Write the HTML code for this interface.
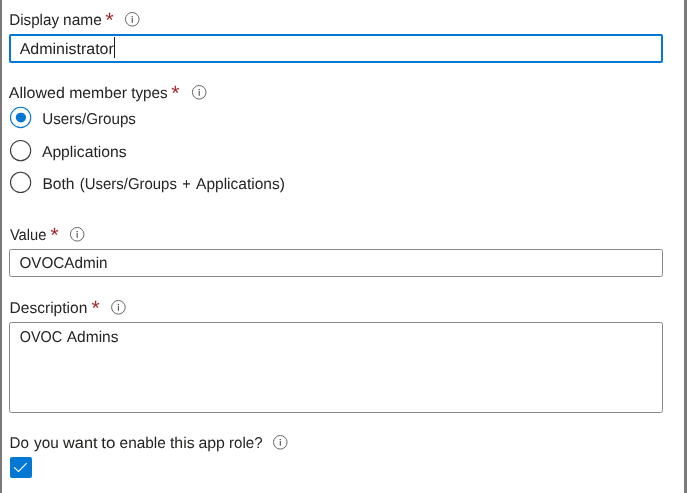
<!DOCTYPE html>
<html><head><meta charset="utf-8">
<style>
html,body{margin:0;padding:0;background:#fff;}
body{width:687px;height:493px;position:relative;overflow:hidden;font-family:"Liberation Sans",sans-serif;color:#323130;}
.lb{position:absolute;left:0;top:0;width:2px;height:493px;background:#7a7878;}
.rb{position:absolute;left:684px;top:0;width:3px;height:493px;background:#7a7878;}
.inp{position:absolute;left:9px;width:654px;box-sizing:border-box;border:1px solid #8a8886;border-radius:2.5px;background:#fff;}
.inp.f{border:2px solid #0277d4;border-radius:2px;}
.ov{position:absolute;left:0;top:0;will-change:transform;}
.tx{font-family:"Liberation Sans",sans-serif;font-size:15.6px;fill:#252423;text-rendering:geometricPrecision;}
.cb{position:absolute;left:10px;top:457px;width:22px;height:21px;background:#0277d4;border-radius:2px;}
.caret{position:absolute;left:114px;top:37px;width:1px;height:21px;background:#1b1b1b;}
</style></head><body>
<div class="lb"></div><div class="rb"></div>
<div class="inp f" style="top:34px;height:29px;"></div>
<div class="caret"></div>
<div class="inp" style="top:249px;height:28px;"></div>
<div class="inp" style="top:322px;height:91px;"></div>
<div class="cb"></div>
<svg class="ov" width="687" height="493" viewBox="0 0 687 493">
<path d="M109.95 16.60L110.30 12.85L108.70 12.85L109.05 16.60ZM109.64 17.03L113.31 16.20L112.82 14.68L109.36 16.17ZM109.14 16.86L111.06 20.10L112.35 19.16L109.86 16.34ZM109.14 16.34L106.65 19.16L107.94 20.10L109.86 16.86ZM109.64 16.17L106.18 14.68L105.69 16.20L109.36 17.03Z" fill="#a4262c"/><circle cx="109.50" cy="16.60" r="0.7" fill="#a4262c"/><circle cx="132.25" cy="19.30" r="6.8" fill="none" stroke="#676563" stroke-width="1"/><rect x="131.70" y="18.00" width="1.1" height="4.8" fill="#535150"/><rect x="131.60" y="15.95" width="1.3" height="1.25" fill="#535150"/>
<path d="M175.85 89.60L176.20 85.85L174.60 85.85L174.95 89.60ZM175.54 90.03L179.21 89.20L178.72 87.68L175.26 89.17ZM175.04 89.86L176.96 93.10L178.25 92.16L175.76 89.34ZM175.04 89.34L172.55 92.16L173.84 93.10L175.76 89.86ZM175.54 89.17L172.08 87.68L171.59 89.20L175.26 90.03Z" fill="#a4262c"/><circle cx="175.40" cy="89.60" r="0.7" fill="#a4262c"/><circle cx="199.20" cy="92.30" r="6.8" fill="none" stroke="#676563" stroke-width="1"/><rect x="198.65" y="91.00" width="1.1" height="4.8" fill="#535150"/><rect x="198.55" y="88.95" width="1.3" height="1.25" fill="#535150"/>
<circle cx="20.6" cy="117.45" r="10.15" fill="#fff" stroke="#0277d4" stroke-width="1.1"/><ellipse cx="20.9" cy="117.55" rx="5.15" ry="4.85" fill="#0277d4"/><circle cx="20.6" cy="150.6" r="10.1" fill="#fff" stroke="#3d3c3a" stroke-width="1.1"/><circle cx="20.6" cy="182.4" r="10.1" fill="#fff" stroke="#3d3c3a" stroke-width="1.1"/>
<path d="M54.95 231.60L55.30 227.85L53.70 227.85L54.05 231.60ZM54.64 232.03L58.31 231.20L57.82 229.68L54.36 231.17ZM54.14 231.86L56.06 235.10L57.35 234.16L54.86 231.34ZM54.14 231.34L51.65 234.16L52.94 235.10L54.86 231.86ZM54.64 231.17L51.18 229.68L50.69 231.20L54.36 232.03Z" fill="#a4262c"/><circle cx="54.50" cy="231.60" r="0.7" fill="#a4262c"/><circle cx="77.20" cy="234.30" r="6.8" fill="none" stroke="#676563" stroke-width="1"/><rect x="76.65" y="233.00" width="1.1" height="4.8" fill="#535150"/><rect x="76.55" y="230.95" width="1.3" height="1.25" fill="#535150"/>
<path d="M96.05 304.60L96.40 300.85L94.80 300.85L95.15 304.60ZM95.74 305.03L99.41 304.20L98.92 302.68L95.46 304.17ZM95.24 304.86L97.16 308.10L98.45 307.16L95.96 304.34ZM95.24 304.34L92.75 307.16L94.04 308.10L95.96 304.86ZM95.74 304.17L92.28 302.68L91.79 304.20L95.46 305.03Z" fill="#a4262c"/><circle cx="95.60" cy="304.60" r="0.7" fill="#a4262c"/><circle cx="118.40" cy="307.30" r="6.8" fill="none" stroke="#676563" stroke-width="1"/><rect x="117.85" y="306.00" width="1.1" height="4.8" fill="#535150"/><rect x="117.75" y="303.95" width="1.3" height="1.25" fill="#535150"/>
<circle cx="280.30" cy="442.30" r="6.8" fill="none" stroke="#676563" stroke-width="1"/><rect x="279.75" y="441.00" width="1.1" height="4.8" fill="#535150"/><rect x="279.65" y="438.95" width="1.3" height="1.25" fill="#535150"/>
<path d="M14.1 467.4 L18.55 471.5 L26.7 463.2" fill="none" stroke="#fff" stroke-width="1.15"/>
<g class="tx"><text transform="translate(9.2 25) scale(0.9751 1)">Display</text><text transform="translate(63.08 25) scale(0.9942 1)">name</text><text transform="translate(19.63 54) scale(1.025 1)">Administrator</text><text transform="translate(8.84 98) scale(1.0245 1)">Allowed</text><text transform="translate(69.16 98) scale(1.0128 1)">member</text><text transform="translate(131.19 98) scale(0.9798 1)">types</text><text transform="translate(42.28 124) scale(0.9735 1)">Users/Groups</text><text transform="translate(41.9 157) scale(1.0079 1)">Applications</text><text transform="translate(42.39 189) scale(1.0012 1)">Both</text><text transform="translate(79.85 189) scale(0.9568 1)">(Users/Groups</text><text transform="translate(182.28 189) scale(0.9236 1)">+</text><text transform="translate(196.05 189) scale(0.9953 1)">Applications)</text><text transform="translate(9.91 240) scale(0.9411 1)">Value</text><text transform="translate(19.4 268) scale(0.9775 1)">OVOCAdmin</text><text transform="translate(9.62 313) scale(0.9956 1)">Description</text><text transform="translate(19.69 342) scale(0.924 1)">OVOC</text><text transform="translate(66.72 342) scale(0.9955 1)">Admins</text><text transform="translate(9.43 448) scale(0.976 1)">Do</text><text transform="translate(34.12 448) scale(0.9815 1)">you</text><text transform="translate(63.09 448) scale(1.0436 1)">want</text><text transform="translate(101.3 448) scale(1.0881 1)">to</text><text transform="translate(119.57 448) scale(0.9877 1)">enable</text><text transform="translate(169.94 448) scale(1.0186 1)">this</text><text transform="translate(198.42 448) scale(1.0162 1)">app</text><text transform="translate(229 448) scale(0.9669 1)">role?</text></g>
</svg>
</body></html>
